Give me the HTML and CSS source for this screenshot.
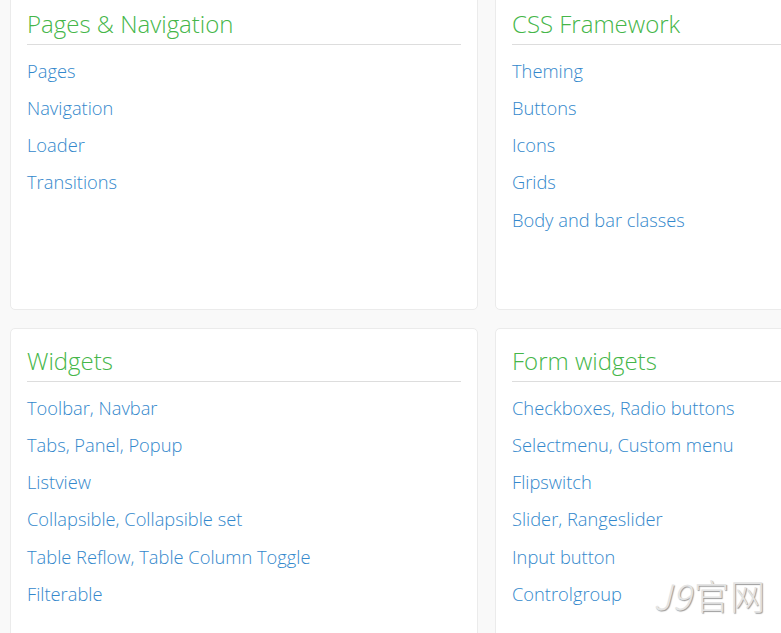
FILE: index.html
```html
<!DOCTYPE html>
<html>
<head>
<meta charset="utf-8">
<link rel="stylesheet" href="styles.css">
</head>
<body>
<div class="grid">
  <div class="card">
    <h2 class="card-title">Pages &amp; Navigation</h2>
    <ul class="links">
      <li><a href="#">Pages</a></li>
      <li><a href="#">Navigation</a></li>
      <li><a href="#">Loader</a></li>
      <li><a href="#">Transitions</a></li>
    </ul>
  </div>
  <div class="card">
    <h2 class="card-title">CSS Framework</h2>
    <ul class="links">
      <li><a href="#">Theming</a></li>
      <li><a href="#">Buttons</a></li>
      <li><a href="#">Icons</a></li>
      <li><a href="#">Grids</a></li>
      <li><a href="#">Body and bar classes</a></li>
    </ul>
  </div>
  <div class="card">
    <h2 class="card-title">Widgets</h2>
    <ul class="links">
      <li><a href="#">Toolbar</a>, <a href="#">Navbar</a></li>
      <li><a href="#">Tabs</a>, <a href="#">Panel</a>, <a href="#">Popup</a></li>
      <li><a href="#">Listview</a></li>
      <li><a href="#">Collapsible</a>, <a href="#">Collapsible set</a></li>
      <li><a href="#">Table Reflow</a>, <a href="#">Table Column Toggle</a></li>
      <li><a href="#">Filterable</a></li>
    </ul>
  </div>
  <div class="card">
    <h2 class="card-title">Form widgets</h2>
    <ul class="links">
      <li><a href="#">Checkboxes</a>, <a href="#">Radio buttons</a></li>
      <li><a href="#">Selectmenu</a>, <a href="#">Custom menu</a></li>
      <li><a href="#">Flipswitch</a></li>
      <li><a href="#">Slider</a>, <a href="#">Rangeslider</a></li>
      <li><a href="#">Input button</a></li>
      <li><a href="#">Controlgroup</a></li>
    </ul>
  </div>
</div>
<div class="watermark"><span class="wm-latin">J9</span>官网</div>
</body>
</html>
```
FILE: styles.css
```css
html, body {
  margin: 0;
  padding: 0;
  height: 100%;
  overflow: hidden;
  background: #f9f9f9;
  font-family: "Open Sans", "Noto Sans", sans-serif;
  font-weight: 300;
}

.grid {
  display: grid;
  grid-template-columns: 468px 468px;
  grid-auto-rows: 319px;
  column-gap: 17px;
  row-gap: 18px;
  margin: -9px 0 0 10px;
  width: 953px;
}

.card {
  background: #fff;
  border: 1px solid #ebebeb;
  border-radius: 5px;
  padding: 16px 16px 0;
  box-sizing: border-box;
}

.card-title {
  margin: 0;
  font-size: 24px;
  font-weight: 300;
  line-height: 31px;
  color: #45b649;
  padding-bottom: 5px;
  border-bottom: 1px solid #dddddd;
}

.links {
  list-style: none;
  margin: 6.5px 0 0;
  padding: 0;
}

.links li {
  font-size: 18.3px;
  line-height: 37.25px;
  color: #3388cc;
}

.links a {
  color: #3388cc;
  text-decoration: none;
}

.watermark {
  position: absolute;
  right: 15px;
  bottom: 13px;
  font-family: "Noto Sans CJK SC", sans-serif;
  font-weight: 300;
  font-size: 35px;
  letter-spacing: 1px;
  color: #e4e4e4;
  text-shadow: 1px 1px 1px #999999;
}

.wm-latin {
  font-style: italic;
  margin-right: 2px;
}
```
